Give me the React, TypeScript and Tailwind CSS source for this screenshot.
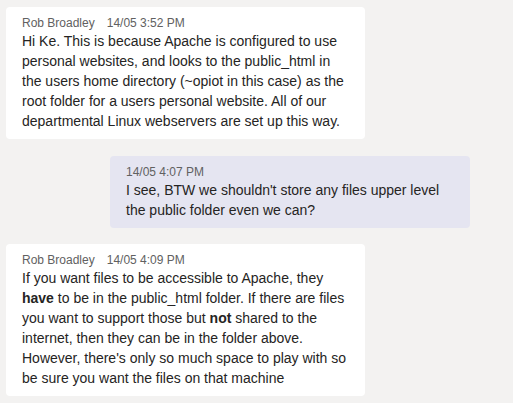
import React from "react";

const font = { fontFamily: '"Segoe UI", "Liberation Sans", Arial, sans-serif' };

function Header({ name, time }: { name?: string; time: string }) {
  return (
    <div className="flex items-center gap-3 text-[12px] leading-4 text-[#616161]">
      {name && <span>{name}</span>}
      <span>{time}</span>
    </div>
  );
}

export default function App() {
  return (
    <div
      className="w-[513px] h-[403px] bg-[#f3f2f1] text-[#252423] pt-[7px] overflow-hidden"
      style={font}
    >
      {/* Incoming message */}
      <div className="ml-[6px] w-[359px] bg-white rounded px-4 pt-2 pb-2">
        <Header name="Rob Broadley" time="14/05 3:52 PM" />
        <p className="text-[14px] leading-5">
          Hi Ke. This is because Apache is configured to use
          <br />
          personal websites, and looks to the public_html in
          <br />
          the users home directory (~opiot in this case) as the
          <br />
          root folder for a users personal website. All of our
          <br />
          departmental Linux webservers are set up this way.
        </p>
      </div>

      {/* Own message */}
      <div className="flex justify-end mt-[17px] pr-[43px]">
        <div className="w-[360px] bg-[#e5e5f1] rounded px-4 pt-2 pb-2">
          <Header time="14/05 4:07 PM" />
          <p className="text-[14px] leading-5">
            I see, BTW we shouldn't store any files upper level
            <br />
            the public folder even we can?
          </p>
        </div>
      </div>

      {/* Incoming message */}
      <div className="ml-[6px] mt-4 w-[359px] bg-white rounded px-4 pt-2 pb-2">
        <Header name="Rob Broadley" time="14/05 4:09 PM" />
        <p className="text-[14px] leading-5">
          If you want files to be accessible to Apache, they
          <br />
          <b className="font-bold">have</b> to be in the public_html folder. If there are files
          <br />
          you want to support those but <b className="font-bold">not</b> shared to the
          <br />
          internet, then they can be in the folder above.
          <br />
          However, there's only so much space to play with so
          <br />
          be sure you want the files on that machine
        </p>
      </div>
    </div>
  );
}
